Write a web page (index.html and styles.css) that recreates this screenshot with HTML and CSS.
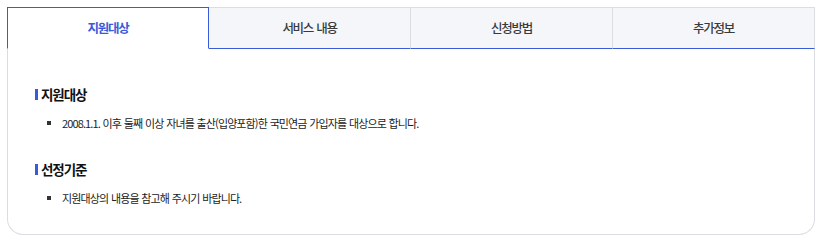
FILE: index.html
```html
<!DOCTYPE html>
<html lang="ko">
<head>
  <meta charset="UTF-8" />
  <meta name="viewport" content="width=device-width, initial-scale=1.0" />
  <title>지원대상</title>
  <link rel="stylesheet" href="styles.css">
</head>
<body>
  <div class="card">
    <ul class="tabs">
      <li class="tab active">지원대상</li>
      <li class="tab">서비스 내용</li>
      <li class="tab">신청방법</li>
      <li class="tab">추가정보</li>
    </ul>

    <div class="panel">
      <h3 class="sub-title">지원대상</h3>
      <ul class="dot-list">
        <li>2008.1.1. 이후 둘째 이상 자녀를 출산(입양포함)한 국민연금 가입자를 대상으로 합니다.</li>
      </ul>

      <h3 class="sub-title">선정기준</h3>
      <ul class="dot-list">
        <li>지원대상의 내용을 참고해 주시기 바랍니다.</li>
      </ul>
    </div>
  </div>
</body>
</html>
```

FILE: styles.css
```css
body {
  margin: 0;
  padding: 7px 8px 0 7px;
  background: #fff;
  color: #222;
  font-family: "Noto Sans CJK KR", "Noto Sans", sans-serif;
}
ul {
  list-style: none;
  margin: 0;
  padding: 0;
}
.card {
  width: 808px;
}
.tabs {
  display: grid;
  grid-template-columns: repeat(4, 1fr);
}
.tab {
  height: 40px;
  line-height: 40px;
  text-align: center;
  font-size: 12.5px;
  font-weight: 500;
  letter-spacing: -1.3px;
  word-spacing: 1px;
  color: #3a3a3a;
  background: #f5f6fa;
  border-top: 1px solid #dcdde2;
  border-right: 1px solid #dcdde2;
  border-bottom: 1px solid #3a5bd9;
}
.tab.active {
  background: #fff;
  color: #3a5bd9;
  font-weight: 700;
  border: 1px solid #3a5bd9;
  border-bottom-color: #fff;
}
.panel {
  border: 1px solid #dcdde2;
  border-top: none;
  border-radius: 0 0 16px 16px;
  padding: 35px 27px 26px;
  height: 124px;
}
.sub-title {
  position: relative;
  margin: 0;
  padding-left: 6px;
  font-size: 13.5px;
  line-height: 20px;
  font-weight: 700;
  letter-spacing: -1.1px;
  color: #111;
}
.sub-title::before {
  content: "";
  position: absolute;
  left: 0;
  top: 5px;
  width: 3px;
  height: 11px;
  background: #3a5bd9;
}
.dot-list {
  margin: 10px 0 27px;
}
.dot-list:last-child {
  margin-bottom: 0;
}
.dot-list li {
  position: relative;
  padding-left: 27px;
  font-size: 11px;
  line-height: 18px;
  letter-spacing: -0.88px;
  word-spacing: 0.5px;
  color: #222;
}
.dot-list li::before {
  content: "";
  position: absolute;
  left: 12px;
  top: 7px;
  width: 4px;
  height: 4px;
  background: #333;
}
```
